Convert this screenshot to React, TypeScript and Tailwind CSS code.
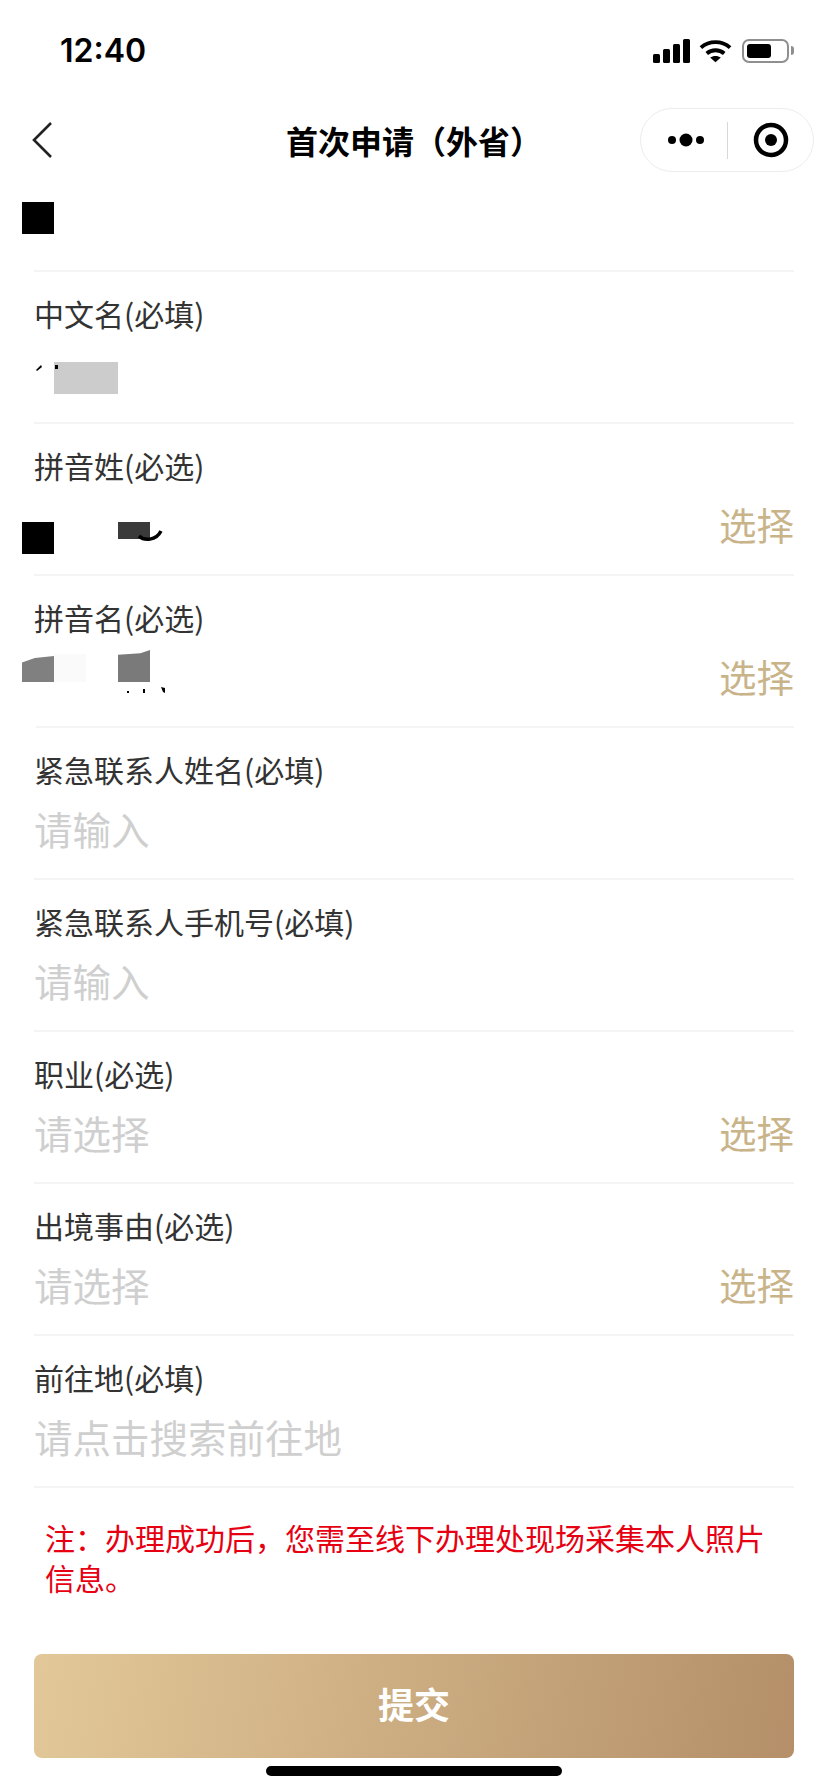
import React from 'react'

const CJK = "font-['Noto_Sans_CJK_SC','Noto_Sans',sans-serif]"

const StatusIcons = () => (
  <div className="flex items-center">
    <svg width="37" height="24" viewBox="0 0 37 24" fill="#000">
      <rect x="0" y="15" width="7" height="9" rx="1.5" />
      <rect x="10" y="10" width="7" height="14" rx="1.5" />
      <rect x="20" y="5" width="7" height="19" rx="1.5" />
      <rect x="30" y="0" width="7" height="24" rx="1.5" />
    </svg>
    <svg className="ml-[9px]" width="33" height="24" viewBox="0 0 34 24" fill="none" stroke="#000" strokeWidth="4">
      <path d="M2 8.5C10.5 1 23.5 1 32 8.5" />
      <path d="M8 14.5C13 10.2 21 10.2 26 14.5" />
      <path d="M17 23.5L11.5 18.8C14.5 16.6 19.5 16.6 22.5 18.8Z" fill="#000" stroke="none" />
    </svg>
    <div className="ml-[10px] flex h-6 w-[47px] items-center rounded-[7px] border-2 border-[#8f8f8f] p-[3px]">
      <div className="h-full w-[24px] rounded-[3px] bg-black" />
    </div>
    <div className="ml-[2px] h-[9px] w-[3px] rounded-r-full bg-[#8f8f8f]" />
  </div>
)

const Capsule = () => (
  <div className="flex h-16 w-[174px] items-center rounded-full border border-[#ededed] bg-white">
    <div className="flex w-[86px] justify-center pl-[4px]">
      <svg width="36" height="14" viewBox="0 0 36 14" fill="#000">
        <circle cx="4" cy="7" r="4" />
        <circle cx="18" cy="7" r="6.5" />
        <circle cx="32" cy="7" r="4" />
      </svg>
    </div>
    <div className="h-[37px] w-px bg-[#d8d8d8]" />
    <div className="flex flex-1 justify-center">
      <svg width="36" height="36" viewBox="0 0 36 36" fill="none">
        <circle cx="18" cy="18" r="15" stroke="#000" strokeWidth="4.5" />
        <circle cx="18" cy="18" r="6" fill="#000" />
      </svg>
    </div>
  </div>
)

const Field = ({ label, placeholder, select, children, divider = 'ml-[34px]' }: {
  label: string, placeholder?: string, select?: boolean, children?: React.ReactNode, divider?: string
}) => (
  <div className="relative h-[152px] shrink-0">
    <div className="px-[34px] pt-[21px] text-[30px] leading-[40px] text-[#333]">{label}</div>
    <div className="mt-[7px] flex h-[64px] items-center justify-between pl-[34px] pr-[34px]">
      {children ? children : <span className="text-[38.5px] leading-[64px] text-[#cfcfcf]">{placeholder}</span>}
      {select ? <span className="ml-auto text-[37.5px] leading-[64px] text-[#c9b48a]">选择</span> : null}
    </div>
    <div className={`absolute bottom-0 left-0 right-[34px] h-[2px] bg-[#f4f4f4] ${divider}`} />
  </div>
)

export default function App() {
  return (
    <div className={`flex h-[1792px] w-[828px] flex-col overflow-hidden bg-white ${CJK}`}>
      <div className="flex h-[100px] shrink-0 items-center justify-between pl-[60px] pr-[34px] pt-[1px]">
        <span className="font-['Inter',sans-serif] text-[32px] font-semibold leading-none text-black">12:40</span>
        <StatusIcons />
      </div>
      <div className="relative flex h-[80px] shrink-0 items-center justify-center">
        <svg className="absolute left-[30px] top-[21px]" width="24" height="38" viewBox="0 0 24 38" fill="none" stroke="#222" strokeWidth="2.6">
          <path d="M21 2L4 19L21 36" />
        </svg>
        <span className="text-[32px] font-bold leading-none text-black">首次申请（外省）</span>
        <div className="absolute left-[640px] top-[8px]">
          <Capsule />
        </div>
      </div>

      <div className="relative h-[92px] shrink-0">
        <div className="ml-[22px] mt-[22px] h-8 w-8 bg-black" />
        <div className="absolute bottom-0 left-[34px] right-[34px] h-[2px] bg-[#f4f4f4]" />
      </div>

      <Field label="中文名(必填)">
        <div className="relative ml-[20px] mt-[12px] h-8 w-16 bg-[#cccccc]">
          <svg className="absolute -left-[18px] top-[2px]" width="24" height="8" viewBox="0 0 24 8" fill="#000">
            <path d="M0 6L5 1L6 3L1 7Z" />
            <rect x="19" y="1" width="3" height="4" />
          </svg>
        </div>
      </Field>
      <Field label="拼音姓(必选)" select>
        <div className="-ml-[12px] mt-[28px] flex items-start">
          <div className="h-8 w-8 bg-black" />
          <div className="ml-16 h-[17px] w-8 bg-[#3a3a3a]" />
          <svg className="-ml-[14px] mt-[8px]" width="28" height="12" viewBox="0 0 28 12" fill="none" stroke="#000" strokeWidth="3.5">
            <path d="M3 6C8 11 20 11 25 1" />
          </svg>
        </div>
      </Field>
      <Field label="拼音名(必选)" select divider="ml-[36px]">
        <div className="relative -ml-[12px] -mt-[20px] flex items-end">
          <div className="h-[26px] w-8 bg-[#808080] [clip-path:polygon(0_25%,40%_8%,100%_0,100%_100%,0_100%)]" />
          <div className="h-[28px] w-8 bg-[#fafafa]" />
          <div className="ml-8 h-8 w-8 bg-[#7a7a7a] [clip-path:polygon(0_15%,70%_10%,100%_0,100%_100%,0_100%)]" />
          <svg className="absolute left-[105px] top-[37px]" width="40" height="6" viewBox="0 0 40 6" fill="#000">
            <rect x="0" y="4" width="2" height="2" />
            <rect x="16" y="2" width="2" height="4" />
            <path d="M34 0L38 1V6L36 5Z" />
          </svg>
        </div>
      </Field>
      <Field label="紧急联系人姓名(必填)" placeholder="请输入" />
      <Field label="紧急联系人手机号(必填)" placeholder="请输入" />
      <Field label="职业(必选)" placeholder="请选择" select />
      <Field label="出境事由(必选)" placeholder="请选择" select />
      <Field label="前往地(必填)" placeholder="请点击搜索前往地" />

      <div className="px-[45px] pt-[29px] text-[30px] leading-[40px] text-[#e60012]">
        注：办理成功后，您需至线下办理处现场采集本人照片信息。
      </div>
      <div className="mx-[34px] mt-[57px] flex h-[104px] shrink-0 items-center justify-center rounded-lg bg-[linear-gradient(100deg,#e2c898,#b48f69)] pb-[6px] text-[36px] font-bold text-white">
        提交
      </div>
      <div className="mx-auto mt-2 h-[10px] w-[296px] rounded-full bg-black" />
    </div>
  )
}
